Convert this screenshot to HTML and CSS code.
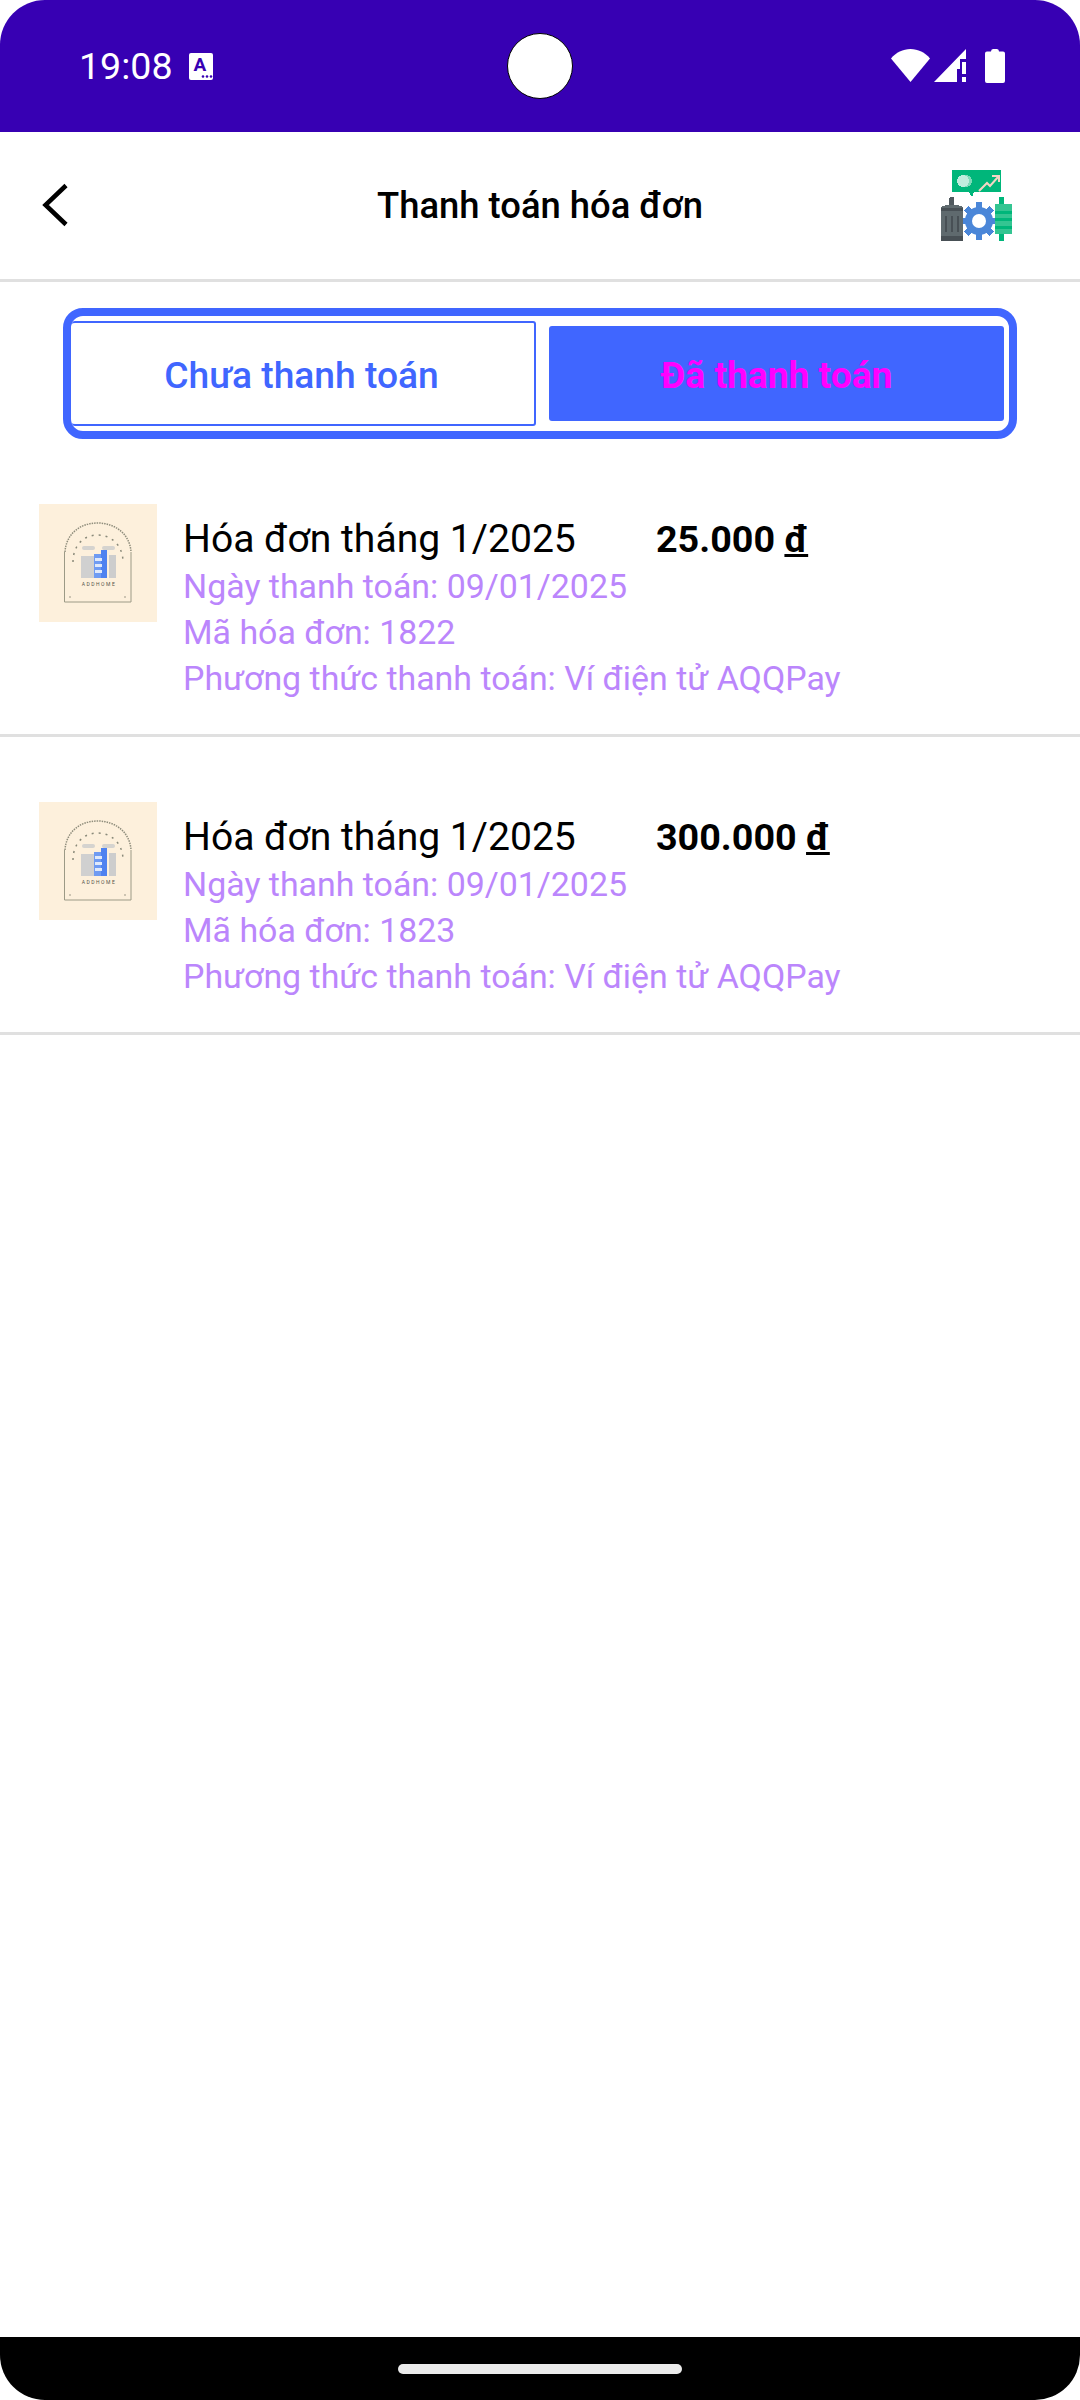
FILE: index.html
```html
<!DOCTYPE html>
<html lang="vi">
<head>
    <meta charset="UTF-8">
    <title>Thanh toán hóa đơn</title>
    <link rel="stylesheet" href="styles.css">
</head>
<body>

<div class="phone">
    <div class="status-bar">
        <span class="time">19:08</span>
        <svg class="status-a" viewBox="0 0 24 27">
            <rect width="24" height="27" rx="2" fill="#fff"/>
            <text x="11" y="18" class="status-a-text" text-anchor="middle">A</text>
            <circle cx="14" cy="23.500" r="1.300" fill="#3700b3"/>
            <circle cx="18" cy="23.500" r="1.300" fill="#3700b3"/>
            <circle cx="22" cy="23.500" r="1.300" fill="#3700b3"/>
        </svg>
        <span class="camera"></span>
        <div class="status-icons">
            <svg class="ico-wifi" viewBox="0 0 39 33"><path d="M0 9.500C5 3.500 12 0 19.500 0S34 3.500 39 9.500L19.500 33z" fill="#fff"/></svg>
            <svg class="ico-signal" viewBox="0 0 32 33">
                <path d="M32 0V10H26V20H23V33H0z" fill="#fff"/>
                <rect x="28" y="13" width="4" height="12" fill="#fff"/>
                <rect x="28" y="28" width="4" height="5" fill="#fff"/>
            </svg>
            <svg class="ico-battery" viewBox="0 0 20 34"><path d="M6 2.500Q6 0 8 0H12Q14 0 14 2.500H18Q20 2.500 20 4.500V32Q20 34 18 34H2Q0 34 0 32V4.500Q0 2.500 2 2.500z" fill="#fff"/></svg>
        </div>
    </div>

    <header class="top-bar">
        <svg class="back" viewBox="0 0 28 44"><path d="M25 2.500L4.500 22L25 41.500" fill="none" stroke="#000" stroke-width="4.500"/></svg>
        <h1>Thanh toán hóa đơn</h1>
        <svg class="app-icon" viewBox="0 0 72 72" shape-rendering="crispEdges">
            <!-- fumetto -->
            <path d="M11 0H60V22H33L31 27L28 22H11z" fill="#00b67a"/>
            <circle cx="25" cy="11" r="6" fill="#7fd9b8"/>
            <circle cx="22" cy="11" r="6" fill="#c0ecdd"/>
            <path d="M38 21L46 13L49 16L57 7M51 6H58V12" fill="none" stroke="#f6d5c4" stroke-width="2" shape-rendering="auto"/>
            <!-- bidone -->
            <rect x="8" y="27" width="5" height="12" rx="2" fill="#50595e"/>
            <path d="M0 38Q0 35 11 35Q22 35 22 38V69Q22 71 11 71Q0 71 0 69z" fill="#5f6a6e"/>
            <rect x="0" y="38" width="22" height="3" fill="#485055"/>
            <rect x="0" y="66" width="22" height="5" fill="#485055"/>
            <rect x="4" y="46" width="2" height="16" fill="#485055"/>
            <rect x="10" y="46" width="2" height="16" fill="#485055"/>
            <rect x="16" y="46" width="2" height="16" fill="#485055"/>
            <!-- ingranaggio -->
            <g fill="#4a86d8">
                <rect x="35" y="32" width="6" height="38"/>
                <rect x="22" y="48" width="36" height="6"/>
                <rect x="35" y="33" width="6" height="36" transform="rotate(45 38 51)"/>
                <rect x="35" y="33" width="6" height="36" transform="rotate(-45 38 51)"/>
            </g>
            <circle cx="38" cy="51" r="14" fill="#4a86d8" shape-rendering="auto"/>
            <circle cx="38" cy="51" r="7" fill="#fff" shape-rendering="auto"/>
            <!-- candela -->
            <rect x="58" y="27" width="5" height="44" fill="#00b67a"/>
            <rect x="54" y="34" width="17" height="30" fill="#34c592"/>
            <rect x="54" y="41" width="17" height="2.500" fill="#00b67a"/>
            <rect x="54" y="48" width="17" height="2.500" fill="#00b67a"/>
            <rect x="54" y="56" width="17" height="2.500" fill="#00b67a"/>
        </svg>
    </header>

    <div class="tabs">
        <div class="tab tab-off">Chưa thanh toán</div>
        <div class="tab tab-on">Đã thanh toán</div>
    </div>

    <main class="list">
        <div class="bill">
            <svg class="thumb" viewBox="0 0 118 118">
                <rect width="118" height="118" fill="#fdf0dc"/>
                <path d="M25.500 48V98H92V48" fill="none" stroke="#9c9a86" stroke-width="1"/>
                <path d="M26 48C27 30 41 19 58.500 19S91 30 92 48" fill="none" stroke="#8f8d7c" stroke-width="1.500" stroke-dasharray="1.500 1"/>
                <path d="M34 58C34 41 45 31 58.500 31S84 41 84 58" fill="none" stroke="#8a8a7a" stroke-width="1.500" stroke-dasharray="2 5"/>
                <rect x="43" y="42" width="13" height="4" rx="2" fill="#d5d3cf"/>
                <rect x="63" y="42" width="13" height="4" rx="2" fill="#d5d3cf"/>
                <rect x="42" y="52" width="14" height="22" fill="#d0d0d0"/>
                <rect x="70" y="51" width="7" height="23" fill="#cdcdcd"/>
                <rect x="55" y="50" width="13" height="24" fill="#6f9bf2"/>
                <rect x="62" y="46" width="6" height="28" fill="#4f82f0"/>
                <rect x="56" y="54" width="7" height="3" fill="#dfe9fb"/>
                <rect x="56" y="60" width="7" height="3" fill="#dfe9fb"/>
                <rect x="56" y="66" width="7" height="3" fill="#dfe9fb"/>
                <text x="60" y="82" class="logo-text" text-anchor="middle">ADDHOME</text>
                <circle cx="31" cy="93" r=".7" fill="#77776a"/>
                <circle cx="86" cy="93" r=".7" fill="#77776a"/>
            </svg>
            <div class="bill-info">
                <div class="bill-head">
                    <span class="bill-title">Hóa đơn tháng 1/2025</span>
                    <span class="bill-price">25.000 <u>đ</u></span>
                </div>
                <p>Ngày thanh toán: 09/01/2025</p>
                <p>Mã hóa đơn: 1822</p>
                <p>Phương thức thanh toán: Ví điện tử AQQPay</p>
            </div>
        </div>
        <div class="bill">
            <svg class="thumb" viewBox="0 0 118 118">
                <rect width="118" height="118" fill="#fdf0dc"/>
                <path d="M25.500 48V98H92V48" fill="none" stroke="#9c9a86" stroke-width="1"/>
                <path d="M26 48C27 30 41 19 58.500 19S91 30 92 48" fill="none" stroke="#8f8d7c" stroke-width="1.500" stroke-dasharray="1.500 1"/>
                <path d="M34 58C34 41 45 31 58.500 31S84 41 84 58" fill="none" stroke="#8a8a7a" stroke-width="1.500" stroke-dasharray="2 5"/>
                <rect x="43" y="42" width="13" height="4" rx="2" fill="#d5d3cf"/>
                <rect x="63" y="42" width="13" height="4" rx="2" fill="#d5d3cf"/>
                <rect x="42" y="52" width="14" height="22" fill="#d0d0d0"/>
                <rect x="70" y="51" width="7" height="23" fill="#cdcdcd"/>
                <rect x="55" y="50" width="13" height="24" fill="#6f9bf2"/>
                <rect x="62" y="46" width="6" height="28" fill="#4f82f0"/>
                <rect x="56" y="54" width="7" height="3" fill="#dfe9fb"/>
                <rect x="56" y="60" width="7" height="3" fill="#dfe9fb"/>
                <rect x="56" y="66" width="7" height="3" fill="#dfe9fb"/>
                <text x="60" y="82" class="logo-text" text-anchor="middle">ADDHOME</text>
                <circle cx="31" cy="93" r=".7" fill="#77776a"/>
                <circle cx="86" cy="93" r=".7" fill="#77776a"/>
            </svg>
            <div class="bill-info">
                <div class="bill-head">
                    <span class="bill-title">Hóa đơn tháng 1/2025</span>
                    <span class="bill-price">300.000 <u>đ</u></span>
                </div>
                <p>Ngày thanh toán: 09/01/2025</p>
                <p>Mã hóa đơn: 1823</p>
                <p>Phương thức thanh toán: Ví điện tử AQQPay</p>
            </div>
        </div>
    </main>

    <div class="nav-bar"><span class="handle"></span></div>
</div>

</body>
</html>
```

FILE: styles.css
```css
* { box-sizing: border-box; }
html, body { margin: 0; padding: 0; background: #fff; }
body { font-family: Roboto, sans-serif; color: #000; }
.phone { width: 1080px; height: 2400px; display: flex; flex-direction: column; overflow: hidden; }

/* barra di stato */
.status-bar { height: 132px; flex: none; background: #3700b3; border-radius: 45px 45px 0 0; display: flex; align-items: flex-start; padding: 0 75px 0 79px; position: relative; }
.time { color: #fff; font-size: 37.6px; line-height: 44px; margin-top: 44px; }
.status-a { width: 24px; height: 27px; margin: 53px 0 0 16px; }
.status-a-text { font-family: Roboto, sans-serif; font-size: 19px; font-weight: 700; fill: #3700b3; }
.camera { position: absolute; left: 507px; top: 33px; width: 66px; height: 66px; background: #fff; border: 1.5px solid #000; border-radius: 50%; }
.status-icons { margin-left: auto; display: flex; align-items: flex-start; padding-top: 49px; }
.ico-wifi { width: 39px; height: 33px; }
.ico-signal { width: 32px; height: 33px; margin-left: 4px; }
.ico-battery { width: 20px; height: 34px; margin-left: 19px; }

/* intestazione */
.top-bar { height: 150px; flex: none; border-bottom: 3px solid #e0e0e0; display: grid; grid-template-columns: 1fr auto 1fr; align-items: center; padding: 0 41px; }
.back { width: 28px; height: 44px; margin-top: -2px; }
.top-bar h1 { margin: 0; font-size: 36.4px; font-weight: 500; line-height: 44px; }
.app-icon { width: 72px; height: 72px; justify-self: end; margin-right: 26px; }

/* schede */
.tabs { flex: none; height: 131px; margin: 26px 63px 0; border: 8px solid #4066ff; border-radius: 20px; display: flex; align-items: center; gap: 13px; padding: 0 5px 0 1px; }
.tab { display: flex; align-items: center; justify-content: center; font-size: 37.2px; font-weight: 500; border-radius: 3px; padding-top: 2px; }
.tab-off { width: 464px; height: 105px; border: 2px solid #4066ff; border-left: none; color: #4066ff; padding-right: 3px; }
.tab-on { width: 455px; height: 95px; background: #4066ff; color: #ff00ff; font-weight: 700; }

/* elenco */
.list { flex: 1; }
.bill { height: 298px; border-bottom: 3px solid #e0e0e0; display: flex; align-items: flex-start; padding: 65px 0 0 39px; }
.thumb { width: 118px; height: 118px; flex: none; }
.logo-text { font-family: Roboto, sans-serif; font-size: 5px; letter-spacing: 1.5px; fill: #55554a; }
.bill-info { margin-left: 26px; }
.bill-head { display: flex; font-size: 39.1px; line-height: 50px; margin-top: 10px; }
.bill-title { width: 473px; }
.bill-price { font-size: 37.7px; font-weight: 700; }
.bill-info p { margin: 0; color: #bb86fc; font-size: 33.9px; line-height: 46px; }

/* barra di navigazione */
.nav-bar { height: 63px; flex: none; background: #000; border-radius: 0 0 45px 45px; display: flex; justify-content: center; padding-top: 27px; }
.handle { width: 284px; height: 10px; background: #ebebeb; border-radius: 5px; }
```
